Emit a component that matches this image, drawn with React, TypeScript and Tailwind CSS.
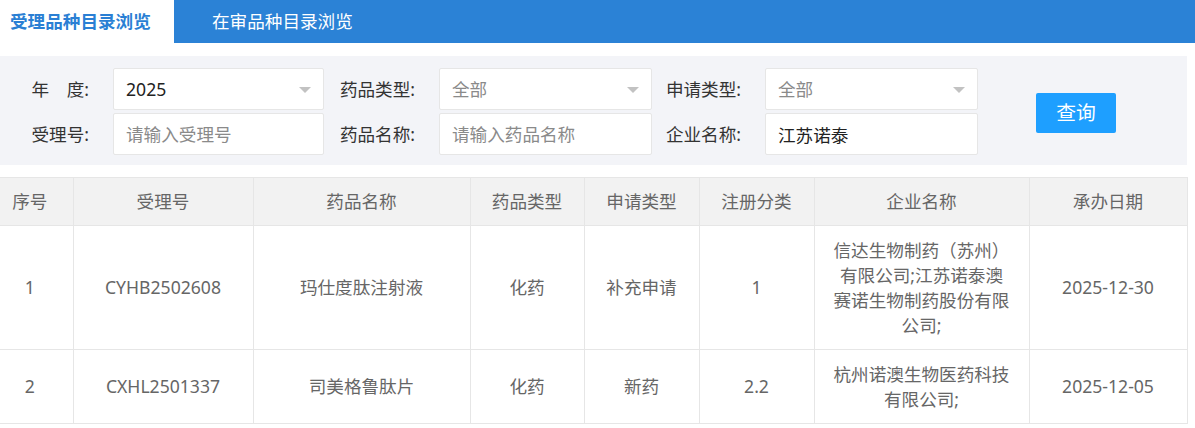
import React from 'react';

const rows = [
  {
    no: '1',
    code: 'CYHB2502608',
    name: '玛仕度肽注射液',
    type: '化药',
    apply: '补充申请',
    cls: '1',
    company: '信达生物制药（苏州）有限公司;江苏诺泰澳赛诺生物制药股份有限公司;',
    date: '2025-12-30',
  },
  {
    no: '2',
    code: 'CXHL2501337',
    name: '司美格鲁肽片',
    type: '化药',
    apply: '新药',
    cls: '2.2',
    company: '杭州诺澳生物医药科技有限公司;',
    date: '2025-12-05',
  },
];

function Field({ label, children, lw = 'w-[114px]', iw = 'w-[213px]' }: { label: React.ReactNode; children: React.ReactNode; lw?: string; iw?: string }) {
  return (
    <div className="flex items-center">
      <label className={`${lw} pr-[24px] text-right text-[#333]`}>{label}</label>
      <div className={iw}>{children}</div>
    </div>
  );
}

function Select({ value, muted }: { value: string; muted?: boolean }) {
  return (
    <div className="relative flex h-[42px] items-center rounded-[2px] border border-[#e6e6e6] bg-white pl-[12px]">
      <span className={muted ? 'text-[#8a8a8a]' : 'text-[#222]'}>{value}</span>
      <span className="absolute right-[12px] top-[18px] h-0 w-0 border-x-[6px] border-t-[6px] border-x-transparent border-t-[#c2c2c2]" />
    </div>
  );
}

function Input({ placeholder, value }: { placeholder: string; value?: string }) {
  return (
    <input
      className="h-[42px] w-full rounded-[2px] border border-[#e6e6e6] bg-white pl-[12px] text-[#222] outline-none placeholder:text-[#8a8a8a]"
      placeholder={placeholder}
      defaultValue={value}
    />
  );
}

export default function App() {
  const th = 'h-[48px] border border-[#e6e6e6] bg-[#f2f2f2] font-normal text-[#666]';
  const td = 'border border-[#e6e6e6] py-[11.5px] leading-[25px] text-[#666]';

  return (
    <div className="min-h-screen bg-white font-['Noto_Sans','Noto_Sans_CJK_SC',sans-serif] text-[17.6px]">
      {/* tabs */}
      <div className="flex h-[43px] bg-[#2b82d6]">
        <div className="flex w-[174px] items-center bg-white pl-[10px] font-bold text-[#2a7fd4]">受理品种目录浏览</div>
        <div className="flex items-center pl-[38px] text-white">在审品种目录浏览</div>
      </div>

      {/* filters */}
      <div className="mt-[13px] flex w-[1187px] items-center bg-[#f3f4f8] pt-[12px] pb-[10px]">
        <div className="grid grid-cols-[325px_327px_326px] gap-y-[3px]">
          <Field label={<>年　度:</>} lw="w-[113px]" iw="w-[211px]">
            <Select value="2025" />
          </Field>
          <Field label="药品类型:">
            <Select value="全部" muted />
          </Field>
          <Field label="申请类型:" lw="w-[113px]">
            <Select value="全部" muted />
          </Field>
          <Field label="受理号:" lw="w-[113px]" iw="w-[211px]">
            <Input placeholder="请输入受理号" />
          </Field>
          <Field label="药品名称:">
            <Input placeholder="请输入药品名称" />
          </Field>
          <Field label="企业名称:" lw="w-[113px]">
            <Input placeholder="请输入企业名称" value="江苏诺泰" />
          </Field>
        </div>
        <button className="ml-[58px] mt-[3px] h-[40px] w-[80px] rounded-[2px] bg-[#1e9fff] text-[19.8px] text-white">查询</button>
      </div>

      {/* table */}
      <table className="mt-[12px] w-[1187px] table-fixed border-collapse text-center">
        <colgroup>
          <col className="w-[73px]" />
          <col className="w-[180px]" />
          <col className="w-[217px]" />
          <col className="w-[114px]" />
          <col className="w-[115px]" />
          <col className="w-[115px]" />
          <col className="w-[215px]" />
          <col className="w-[158px]" />
        </colgroup>
        <thead>
          <tr>
            <th className={`${th} border-l-0 pr-[13px]`}>序号</th>
            <th className={th}>受理号</th>
            <th className={th}>药品名称</th>
            <th className={th}>药品类型</th>
            <th className={th}>申请类型</th>
            <th className={th}>注册分类</th>
            <th className={th}>企业名称</th>
            <th className={th}>承办日期</th>
          </tr>
        </thead>
        <tbody>
          {rows.map((r) => (
            <tr key={r.no}>
              <td className={`${td} border-l-0 pr-[13px]`}>{r.no}</td>
              <td className={td}>{r.code}</td>
              <td className={td}>{r.name}</td>
              <td className={td}>{r.type}</td>
              <td className={td}>{r.apply}</td>
              <td className={td}>{r.cls}</td>
              <td className={td}>
                <div className="mx-auto w-[178px]">{r.company}</div>
              </td>
              <td className={td}>{r.date}</td>
            </tr>
          ))}
        </tbody>
      </table>
    </div>
  );
}
